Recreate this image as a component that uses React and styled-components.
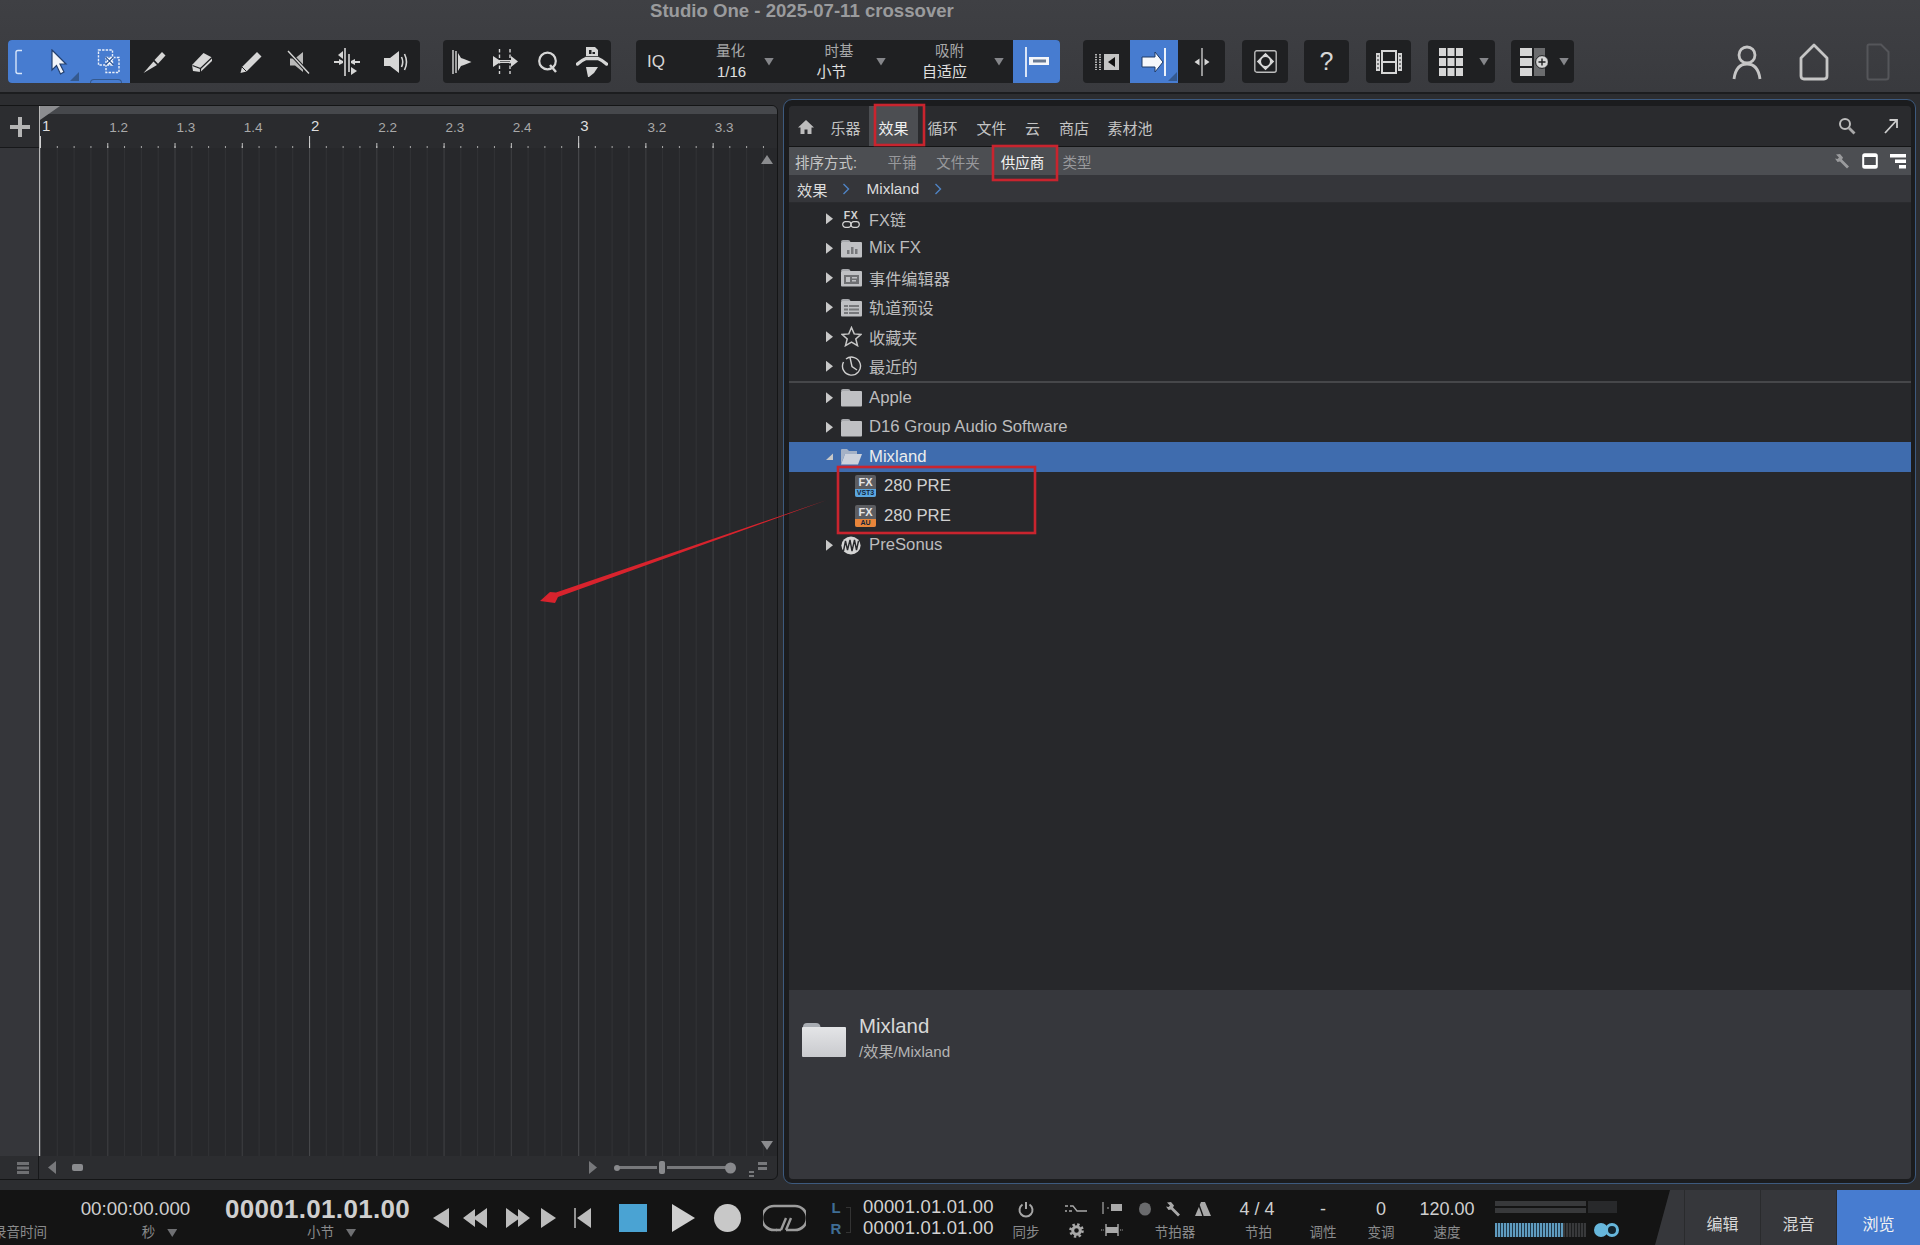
import React from 'react';
import styled, { createGlobalStyle } from 'styled-components';

const sans = `"Liberation Sans","Noto Sans CJK SC",sans-serif`;

const Global = createGlobalStyle`
  html, body { margin: 0; padding: 0; background: #141414; }
  body { font-family: ${sans}; overflow: hidden; }
  * { box-sizing: border-box; }
`;

const Page = styled.div`
  position: relative; width: 1920px; height: 1245px; overflow: hidden;
  display: flex; flex-direction: column; background: #2c2d30;
`;

/* ---------- top bar ---------- */
const TopBar = styled.header`
  height: 94px; flex: none; background: linear-gradient(#3f4044, #393a3e);
  border-bottom: 2px solid #1c1d1f;
`;
const Title = styled.div`
  height: 20px; line-height: 20px; padding-left: 650px; padding-top: 1px;
  font-size: 18.6px; font-weight: 700; color: #9a9b9d; white-space: nowrap;
`;
const Toolbar = styled.div`
  display: flex; align-items: flex-start; height: 43px; margin-top: 20px; padding-left: 8px;
`;
const Group = styled.div`
  display: flex; align-items: stretch; height: 43px; flex: none;
  width: ${p => p.$w}px; margin-left: ${p => p.$ml || 0}px; padding-left: ${p => p.$pl || 0}px;
  background: #1f2022; border-radius: 4px; overflow: hidden; color: #d6d6d6;
`;
const Tool = styled.div`
  position: relative; flex: none; display: flex; align-items: center; justify-content: center;
  width: ${p => p.$w}px; height: 100%; margin-left: ${p => (p.$end ? 'auto' : '0')};
  background: ${p => (p.$on ? '#477cd0' : 'transparent')};
`;
const Corner = styled.span`
  position: absolute; right: ${p => p.$r || 0}px; bottom: 2px; width: 9px; height: 9px;
  background: #34598f; clip-path: polygon(100% 0, 100% 100%, 0 100%);
`;
const ToolTab = styled.span`
  position: absolute; left: 2px; bottom: 0; width: 32px; height: 4px;
  border: 1px solid #34598f; border-bottom: 0; border-radius: 4px 4px 0 0;
`;
const IQ = styled.div`
  width: 40px; flex: none; display: flex; align-items: center; justify-content: center;
  font-size: 17px; color: #d6d6d6;
`;
const Selector = styled.div`
  display: flex; align-items: center; flex: none; margin-left: ${p => p.$ml}px;
`;
const SelectorStack = styled.div`
  width: ${p => p.$w}px; text-align: center; white-space: nowrap;
`;
const SelectorName = styled.div`
  font-size: 14.5px; line-height: 20px; color: #a8a9aa; padding-left: ${p => p.$o || 0}px;
`;
const SelectorValue = styled.div`
  font-size: 15px; line-height: 21px; color: #e0e0e0;
  padding-left: ${p => p.$l || 0}px; padding-right: ${p => p.$r || 0}px;
`;
const Caret = styled.span`
  flex: none; width: 10px; height: 8px; margin-left: ${p => p.$ml || 0}px; align-self: center;
  background: ${p => p.$c || '#85868a'}; clip-path: polygon(0 0, 100% 0, 50% 100%);
`;
const HelpMark = styled.span`
  font-size: 25px; font-weight: 400; color: #d6d6d6; line-height: 1;
`;
const RightTools = styled.div`
  display: flex; margin-left: 158px; gap: 37px; align-items: center; height: 43px;
`;

/* ---------- main ---------- */
const Main = styled.main`
  flex: 1; display: flex; align-items: flex-start; min-height: 0;
`;
const Editor = styled.section`
  width: 777px; height: 1073px; margin-top: 12px; flex: none; display: flex; flex-direction: column;
  border-radius: 0 5px 5px 0; overflow: hidden; outline: 1px solid #141516; background: #2a2b2e;
`;
const EditorBody = styled.div`
  flex: 1; display: flex; min-height: 0;
`;
const TrackColumn = styled.div`
  width: 39px; flex: none; display: flex; flex-direction: column; background: #35363a;
`;
const AddCell = styled.div`
  height: 42px; display: flex; align-items: center; justify-content: center;
  background: #2c2d30; border-bottom: 1px solid #17181a;
`;
const Timeline = styled.div`
  position: relative; flex: 1; display: flex; flex-direction: column; min-width: 0;
  border-left: 1px solid #b8b8b8;
`;
const RulerStrip = styled.div`
  position: relative; height: 8px; flex: none; background: #46484c;
`;
const RulerFlag = styled.span`
  position: absolute; left: 0; top: 0; width: 20px; height: 14px; background: #8b8c8f;
  clip-path: polygon(0 0, 100% 0, 0 100%);
`;
const Ruler = styled.div`
  height: 34px; flex: none; display: flex; background-color: #2a2b2e; overflow: hidden;
  background-image:
    linear-gradient(90deg, #d0d0d0 1px, transparent 1px),
    linear-gradient(90deg, #c2c2c2 1px, transparent 1px),
    linear-gradient(90deg, #aaaaaa 1px, transparent 1px);
  background-size: 269.08px 12px, 67.27px 5px, 16.82px 2px;
  background-position: 0 100%, 0 100%, 0 100%;
  background-repeat: repeat-x;
`;
const Beat = styled.div`
  width: 67.27px; flex: none; padding-left: 2px; padding-top: ${p => (p.$bar ? 4 : 6)}px;
  font-size: ${p => (p.$bar ? 15 : 13.5)}px; line-height: 16px;
  color: ${p => (p.$bar ? '#dedede' : '#a9a9a9')};
`;
const Grid = styled.div`
  flex: 1; background-color: #27282b;
  background-image:
    linear-gradient(90deg, #47484b 1px, transparent 1px),
    linear-gradient(90deg, #3b3c3f 1px, transparent 1px),
    linear-gradient(90deg, #313235 1px, transparent 1px);
  background-size: 269.08px 100%, 67.27px 100%, 16.82px 100%;
`;
const ScrollArrow = styled.span`
  position: absolute; right: 4px; width: 12px; height: 9px; background: #8b8c8f;
  ${p => (p.$up ? 'top: 49px; clip-path: polygon(50% 0, 100% 100%, 0 100%);'
    : 'bottom: 6px; clip-path: polygon(0 0, 100% 0, 50% 100%);')}
`;
const EditorFoot = styled.div`
  height: 23px; flex: none; display: flex; align-items: center; background: #2c2d30;
`;
const FootLeft = styled.div`
  width: 39px; height: 100%; flex: none; display: flex; align-items: center; justify-content: flex-end;
  padding-right: 9px; border-right: 1px solid #17181a;
`;
const FootArrow = styled.span`
  flex: none; width: 8px; height: 13px; background: #77787b; margin-left: ${p => p.$ml}px;
  clip-path: ${p => (p.$left ? 'polygon(100% 0, 100% 100%, 0 50%)' : 'polygon(0 0, 100% 50%, 0 100%)')};
`;
const ScrollThumb = styled.span`
  flex: none; width: 11px; height: 7px; border-radius: 2px; background: #8a8b8e; margin-left: 16px;
`;
const ZoomSlider = styled.div`
  position: relative; flex: none; width: 120px; height: 3px; margin-left: 18px; background: #77787b; border-radius: 2px;
`;
const SliderEnd = styled.span`
  position: absolute; top: 50%; transform: translateY(-50%); border-radius: 50%; background: #88898c;
  left: ${p => p.$x}px; width: ${p => p.$s}px; height: ${p => p.$s}px;
`;
const SliderThumb = styled.span`
  position: absolute; left: 44px; top: -5px; width: 6px; height: 13px; border-radius: 2px; background: #88898c;
  box-shadow: 0 0 0 2px #2c2d30;
`;

/* ---------- browser panel ---------- */
const Frame = styled.section`
  width: 1133px; height: 1085px; margin: 5px 0 0 6px; flex: none; padding: 6px 4px 4px 5px;
  border: 1.5px solid #3d5a7e; border-radius: 9px; background: #1b1c1e;
`;
const Panel = styled.div`
  height: 100%; display: flex; flex-direction: column; background: #27282b; border-radius: 4px; overflow: hidden;
`;
const TabBar = styled.nav`
  height: 41px; flex: none; display: flex; align-items: stretch; background: #2a2b2e;
  border-bottom: 1px solid #141516; font-size: 15px; color: #c4c4c4;
`;
const Tab = styled.div`
  flex: none; width: ${p => p.$w}px; display: flex; align-items: center; justify-content: center;
  background: ${p => (p.$on ? '#4c4e52' : 'transparent')}; color: ${p => (p.$on ? '#f0f0f0' : '#c4c4c4')};
  padding-top: 2px; white-space: nowrap;
`;
const TabRight = styled.div`
  margin-left: auto; display: flex; align-items: center; gap: 28px; padding-right: 13px;
`;
const SortBar = styled.div`
  height: 28px; flex: none; display: flex; align-items: center; background: #4c4e52; font-size: 14.5px; color: #c6c6c6;
  padding-left: 6px;
`;
const SortLabel = styled.span`
  width: 84px; flex: none; white-space: nowrap;
`;
const SortOption = styled.span`
  flex: none; width: ${p => p.$w}px; text-align: center; white-space: nowrap;
  color: ${p => (p.$on ? '#f4f4f4' : '#98999c')};
`;
const SortIcons = styled.div`
  margin-left: auto; display: flex; align-items: center; gap: 12px; padding-right: 5px;
`;
const Crumbs = styled.div`
  height: 28px; flex: none; display: flex; align-items: center; background: #35363a;
  font-size: 15.3px; color: #dcdcdc; padding-left: 8px; border-bottom: 1px solid #2a2b2e;
`;
const CrumbChevron = styled.svg`
  flex: none; width: 8px; height: 12px; margin: 0 ${p => p.$mr || 0}px 0 ${p => p.$ml || 0}px;
`;
const Tree = styled.div`
  flex: 1; padding-top: 1px; min-height: 0;
`;
const Row = styled.div`
  height: 29.5px; display: flex; align-items: center; padding-left: ${p => p.$pl || 37}px;
  background: ${p => (p.$on ? '#3f6cae' : 'transparent')};
  color: ${p => (p.$on ? '#ececec' : p.$leaf ? '#d0d0d0' : '#bcbcbd')};
  font-size: ${p => (p.$lat ? 16.7 : 16.2)}px; white-space: nowrap;
`;
const Twist = styled.span`
  flex: none; width: 7px; height: 11px; margin-right: 7px; background: #c8c8c8;
  clip-path: ${p => (p.$open ? 'polygon(100% 20%, 100% 80%, 0 80%)' : 'polygon(0 0, 100% 50%, 0 100%)')};
`;
const RowIcon = styled.span`
  flex: none; width: 22px; height: 22px; margin-right: 7px; display: flex; align-items: center; justify-content: center;
`;
const Separator = styled.div`
  height: 2px; background: #46474a;
`;
const ChainIcon = styled.span`
  display: flex; flex-direction: column; align-items: center; color: #d4d4d4;
  font-size: 10.5px; font-weight: 700; line-height: 11px; letter-spacing: .5px;
`;
const FxBadge = styled.span`
  flex: none; width: 21px; height: 22px; margin-right: 8px; border-radius: 2px; overflow: hidden;
  display: flex; flex-direction: column; background: #5c5d61; text-align: center;
`;
const FxTop = styled.span`
  height: 14px; line-height: 14px; font-size: 11px; font-weight: 700; color: #e6e6e6;
`;
const FxBottom = styled.span`
  height: 8px; line-height: 8px; font-size: 7px; font-weight: 700;
  background: ${p => p.$c}; color: #12243a;
`;
const Info = styled.div`
  height: 189px; flex: none; display: flex; align-items: flex-start; padding: 32px 0 0 13px; background: #36373c;
`;
const InfoText = styled.div`
  margin-left: 13px; margin-top: -9px;
`;
const InfoName = styled.div`
  font-size: 20.4px; line-height: 26px; color: #d8d8d8;
`;
const InfoPath = styled.div`
  font-size: 15.2px; line-height: 20px; margin-top: 3px; color: #b4b4b4;
`;

/* ---------- transport ---------- */
const Transport = styled.footer`
  height: 55px; flex: none; display: flex; align-items: flex-start; background: #141414; color: #cfcfcf;
`;
const Cell = styled.div`
  flex: none; width: ${p => p.$w}px; margin-left: ${p => p.$ml || 0}px; height: 55px;
  display: flex; flex-direction: column; align-items: center; padding-top: 7px;
`;
const Value = styled.div`
  height: 24px; line-height: 24px; font-size: ${p => p.$s || 18}px; white-space: nowrap; color: #cfcfcf;
  display: flex; align-items: center;
  font-weight: ${p => (p.$bold ? 700 : 400)}; letter-spacing: ${p => p.$ls || 0}px;
`;
const Label = styled.div`
  display: flex; align-items: center; gap: 12px; height: 20px; margin-top: 2px; line-height: 20px;
  font-size: 13.5px; color: #8a8b8c; white-space: nowrap; padding-left: ${p => p.$pl || 0}px;
`;
const RecLabel = styled.div`
  flex: none; width: 47px; height: 55px; display: flex; justify-content: flex-end;
  padding-top: 33px; font-size: 13.5px; line-height: 20px; color: #8a8b8c; white-space: nowrap;
`;
const TBtn = styled.span`
  flex: none; display: block; margin: ${p => p.$mt || 14}px 0 0 ${p => p.$ml}px; line-height: 0;
`;
const Stop = styled.span`
  flex: none; width: 28px; height: 28px; margin: 14px 0 0 ${p => p.$ml}px; background: #4aa3d3;
`;
const Play = styled.span`
  flex: none; width: 23px; height: 28px; margin: 14px 0 0 ${p => p.$ml}px; background: #cfcfcf;
  clip-path: polygon(0 0, 100% 50%, 0 100%);
`;
const Rec = styled.span`
  flex: none; width: 27px; height: 28px; margin: 14px 0 0 ${p => p.$ml}px; background: #c8c8c8; border-radius: 50%;
`;
const LR = styled.div`
  flex: none; width: 14px; margin: 7px 0 0 23px; color: #3f6d94; font-size: 15px; font-weight: 700; line-height: 21px; text-align: center;
`;
const LRBracket = styled.span`
  flex: none; width: 5px; height: 26px; margin: 17px 12px 0 3px; border: 1px solid #333; border-left: 0;
`;
const LocCol = styled.div`
  flex: none; width: 131px; margin-top: 6px; font-size: 18.5px; line-height: 21px; color: #d2d2d2; white-space: nowrap; letter-spacing: .15px;
`;
const MiniIcons = styled.div`
  flex: none; display: grid; grid-template-columns: 36px 36px; grid-auto-rows: 22px; width: 72px; margin: 7px 0 0 ${p => p.$ml}px;
  align-items: center; justify-items: center; color: #a9a9a9;
`;
const MetroIcons = styled.div`
  display: flex; align-items: center; gap: 14px; height: 24px; color: #a9a9a9;
`;
const Meters = styled.div`
  flex: none; width: 122px; margin: 11px 0 0 ${p => p.$ml}px; display: flex; flex-direction: column; gap: 10px;
`;
const MeterTop = styled.div`
  display: grid; grid-template-columns: 91px 29px; column-gap: 2px; height: 12px;
`;
const MeterBars = styled.div`
  display: flex; flex-direction: column; justify-content: space-between;
`;
const MeterBar = styled.span`
  height: 5px; background: #38393b;
`;
const MeterBox = styled.span`
  background: #28292b;
`;
const MeterBottom = styled.div`
  display: flex; align-items: center; height: 14px;
`;
const VU = styled.div`
  flex: none; width: 91px; height: 14px; display: flex;
`;
const VULevel = styled.span`
  width: 68px; height: 100%;
  background: repeating-linear-gradient(90deg, #5f9bbf 0 2px, #213544 2px 3px);
`;
const VURest = styled.span`
  flex: 1; background: repeating-linear-gradient(90deg, #38393b 0 2px, #1c1d1e 2px 3px);
`;
const ToggleLeft = styled.span`
  flex: none; width: 14px; height: 14px; margin-left: 8px; border-radius: 50%; background: #67b7dc;
`;
const ToggleRight = styled.span`
  flex: none; width: 14px; height: 14px; margin-left: -3px; border-radius: 50%; background: #12242e; border: 3px solid #67b7dc;
`;
const Slant = styled.div`
  flex: none; width: 29px; height: 55px; margin-left: auto; background: #36373b;
  clip-path: polygon(15px 0, 100% 0, 100% 100%, 0 100%);
`;
const PageTab = styled.div`
  flex: none; width: ${p => p.$w}px; height: 55px; display: flex; align-items: center; justify-content: center;
  padding-top: 11px; font-size: 16px; color: ${p => (p.$on ? '#f2f2f2' : '#d8d8d8')};
  background: ${p => (p.$on ? '#477cd0' : '#36373b')}; border-left: 1px solid #2a2b2d;
`;
const Overlay = styled.svg`
  position: absolute; inset: 0; width: 1920px; height: 1245px; pointer-events: none;
`;
const Svg = styled.svg`
  display: block; flex: none;
`;

/* ---------- icons ---------- */
const I = ({ w = 24, h = 24, vb = '0 0 24 24', children, ...r }) => (
  <Svg width={w} height={h} viewBox={vb} {...r}>{children}</Svg>
);
const L = '#d6d6d6';
const D = '#1f2022';
const Icons = {
  Bracket: () => <I w={10} h={26} vb="0 0 10 26"><path d="M8 1.5H4Q2 1.5 2 3.5V22.5Q2 24.5 4 24.5H8" fill="none" stroke="#d8e6fa" strokeWidth="1.4" /></I>,
  Cursor: () => <I w={18} h={26} vb="0 0 18 26"><path d="M2 1L16 15H10L14 23L10.5 25L6.5 16.5L2 21Z" fill="#f1f4f9" stroke="#23406f" strokeWidth="1.2" /></I>,
  Range: () => <I w={24} h={28} vb="0 0 24 28"><rect x="1.5" y="2" width="14" height="15" fill="none" stroke="#eaf0fa" strokeWidth="1.4" strokeDasharray="2.4 1.2" /><rect x="9" y="9.5" width="13" height="15" fill="none" stroke="#eaf0fa" strokeWidth="1.4" strokeDasharray="2.4 1.2" /><path d="M10 10h5.5v6.5H10z" fill="#fff" /><path d="M8.5 9l8 8M16.5 9l-8 8" stroke="#2d5595" strokeWidth="1.1" /></I>,
  Knife: () => <I><path d="M1.5 23L11.5 11.5L15 15Z" fill={L} /><path d="M12.5 10L20 2L23.5 5.5L16 13.8Z" fill={L} /></I>,
  Eraser: () => <I><path d="M2 15L13.5 3L22 7.5V11L10.5 22L3 21Z" fill={L} /><path d="M2.5 15.5L10.5 18.5L22 7.5M10.5 18.5V22" fill="none" stroke={D} strokeWidth="1.2" /></I>,
  Pencil: () => <I><path d="M1.5 23L3 17L18 2L22.5 6.5L7.5 21.5Z" fill={L} /><path d="M3 17L7.5 21.5" stroke={D} strokeWidth="1" /></I>,
  Mute: () => <I><path d="M3 8.5H8L16 2V22L8 15.5H3Z" fill="#b9b9b9" /><path d="M1 1L22 23.5" stroke={D} strokeWidth="3.5" /><path d="M1 1L22 23.5" stroke={L} strokeWidth="1.4" /></I>,
  Bend: () => <I w={26} h={28} vb="0 0 26 28"><path d="M11 0V28M15 6V24" stroke={L} strokeWidth="1.6" /><path d="M0 13H9V15H0ZM17 13H26V15H17Z" fill={L} /><path d="M9 3V11L4 7Z" fill={L} /><path d="M17 19L23 23L17 27Z" fill={L} /><path d="M5 11L9 13V15L5 17Z" fill={L} /><path d="M21 11L17 13V15L21 17Z" fill={L} /></I>,
  Speaker: () => <I w={26} h={26} vb="0 0 26 26"><path d="M1 9H7L16 2V24L7 17H1Z" fill={L} /><path d="M18.5 8Q21 13 18.5 18M21.5 5Q25.5 13 21.5 21" fill="none" stroke={L} strokeWidth="1.6" /></I>,
  Quant: () => <I w={20} h={24} vb="0 0 20 24"><path d="M1 0V24M4 1V23" stroke="#b8b8b8" strokeWidth="1.7" /><path d="M6 3L9 8L12 9L19.5 12L12 15L9 16L6 21Z" fill={L} /></I>,
  Strip: () => <I w={25} h={25} vb="0 0 25 25"><path d="M6.5 0V25M17 0V25" stroke={L} strokeWidth="1.4" strokeDasharray="3.5 2" /><path d="M0 7L6 11V14L0 18ZM18 7L25 12.5L18 18Z" fill={L} /><path d="M6 11H18V14H6Z" fill={L} /><path d="M7 12.5H17" stroke={D} strokeWidth=".6" /></I>,
  Q: () => <I w={22} h={24} vb="0 0 22 24"><circle cx="10.5" cy="11" r="8.3" fill="none" stroke={L} strokeWidth="2.2" /><path d="M13 15L19 22" stroke={L} strokeWidth="2.4" /></I>,
  Bounce: () => <I w={32} h={30} vb="0 0 32 30"><path d="M10 0H19L22 3V9H10Z" fill={L} /><path d="M13 3H15.5V7H13ZM16.5 5H19V7H16.5Z" fill={D} /><path d="M1.5 17Q6 13 10 11.5H22Q26 13 30.5 17" fill="none" stroke={L} strokeWidth="3.4" strokeLinecap="round" /><path d="M10 20H22L18 26L13 30H12Z" fill={L} /></I>,
  Snap: () => <I w={26} h={32} vb="0 0 26 32"><path d="M2 1V31" stroke="#fff" strokeWidth="1.6" /><rect x="5" y="11" width="20" height="8" fill="#f4f6fa" /><rect x="9" y="13.5" width="13" height="3" fill="#6a7a92" /></I>,
  Pre: () => <I w={24} h={16} vb="0 0 24 16"><path d="M1 0V16M5 0V16" stroke={L} strokeWidth="1.6" strokeDasharray="1.4 1.1" /><path d="M9 0H24V16H9Z" fill="#c4c4c4" /><path d="M20 3V13L13 8Z" fill="#111" /></I>,
  Insert: () => <I w={26} h={30} vb="0 0 26 30"><path d="M24 1V29" stroke="#fff" strokeWidth="1.8" /><path d="M1 10H14V5L22 15L14 25V20H1Z" fill="#f6f8fb" stroke="#1e3a66" strokeWidth="1" /></I>,
  Split: () => <I w={18} h={30} vb="0 0 18 30"><path d="M9 1V29" stroke={L} strokeWidth="1.3" /><path d="M6.5 11.5V18.5L1.5 15ZM11.5 11.5V18.5L16.5 15Z" fill={L} /></I>,
  Fit: () => <I w={23} h={23} vb="0 0 23 23"><rect x=".8" y=".8" width="21.4" height="21.4" rx="2" fill="none" stroke="#bdbdbd" strokeWidth="1.4" /><circle cx="11.5" cy="11.5" r="5.4" fill="none" stroke={L} strokeWidth="1.9" /><path d="M11.5 2.8L15 6.3H8ZM11.5 20.2L15 16.7H8ZM2.8 11.5L6.3 8V15ZM20.2 11.5L16.7 8V15Z" fill={L} /></I>,
  Film: () => <I w={26} h={28} vb="0 0 26 28"><path d="M5 2H21V26H5ZM0 5H4V23H0ZM22 5H26V23H22Z" fill={L} /><path d="M7 4H19V13H7ZM7 15H19V24H7Z" fill={D} /><path d="M1 8H3M1 12H3M1 16H3M1 20H3M23 8H25M23 12H25M23 16H25M23 20H25" stroke={D} strokeWidth="1.2" /></I>,
  Cells: () => <I w={24} h={28} vb="0 0 24 28"><path d="M0 0H7V8H0ZM8.5 0H15.5V8H8.5ZM17 0H24V8H17ZM0 10H7V18H0ZM8.5 10H15.5V18H8.5ZM17 10H24V18H17ZM0 20H7V28H0ZM8.5 20H15.5V28H8.5ZM17 20H24V28H17Z" fill={L} /></I>,
  AddCols: () => <I w={28} h={28} vb="0 0 28 28"><path d="M0 0H12V8H0ZM0 10H12V18H0ZM0 20H12V28H0Z" fill={L} /><path d="M14 0H25V28H14Z" fill="#6b6c6e" /><circle cx="22" cy="14" r="6.4" fill={L} stroke={D} strokeWidth="1" /><path d="M18.5 14H25.5M22 10.5V17.5" stroke={D} strokeWidth="1.4" /></I>,
  User: () => <I w={30} h={38} vb="0 0 30 38"><circle cx="15" cy="12" r="8" fill="none" stroke="#c6c6c6" strokeWidth="2.8" /><path d="M2 36Q4 21 15 21Q26 21 28 36" fill="none" stroke="#c6c6c6" strokeWidth="2.8" /></I>,
  Home: () => <I w={30} h={38} vb="0 0 30 38"><path d="M15 2L28 15V33Q28 36 25 36H5Q2 36 2 33V15Z" fill="none" stroke="#c6c6c6" strokeWidth="2.8" strokeLinejoin="round" /></I>,
  Doc: () => <I w={24} h={38} vb="0 0 24 38"><path d="M3 1.5H15L22.5 9V34Q22.5 36.5 20 36.5H3Q1.5 36.5 1.5 34V3Q1.5 1.5 3 1.5Z" fill="none" stroke="#55565a" strokeWidth="2" /></I>,
  Plus: () => <I w={22} h={22} vb="0 0 22 22"><path d="M9 1H13V9H21V13H13V21H9V13H1V9H9Z" fill="#b5b5b5" /></I>,
  House: () => <I w={16} h={16} vb="0 0 16 16"><path d="M8 1L16 8.5H13.5V15H9.5V10.5H6.5V15H2.5V8.5H0Z" fill="#bdbdbd" /></I>,
  Search: () => <I w={18} h={18} vb="0 0 18 18"><circle cx="7" cy="7" r="5" fill="none" stroke="#bcbcbc" strokeWidth="2" /><path d="M11 11L16.5 16.5" stroke="#a8a8a8" strokeWidth="2.8" /></I>,
  Pop: () => <I w={14} h={16} vb="0 0 14 16"><path d="M1 15L12 3M5.5 2H13V10" fill="none" stroke="#cdcdcd" strokeWidth="1.8" /></I>,
  WrenchSm: ({ c = '#9a9b9d', s = 16 }) => <I w={s} h={s} vb="0 0 16 16"><path d="M2 1.5L6 1L9 4.5L8 6.5L15 13.5L13 15.5L6 8.5L3.5 9L1 5.5L3.5 6L5 4.5Z" fill={c} /></I>,
  Window: () => <I w={16} h={16} vb="0 0 16 16"><rect x="1.2" y="1.2" width="13.6" height="13.6" rx="1.5" fill="none" stroke="#fff" strokeWidth="2" /><rect x="1" y="1" width="14" height="3" fill="#fff" /><rect x="1" y="12" width="14" height="3" fill="#fff" /></I>,
  List: () => <I w={16} h={16} vb="0 0 16 16"><path d="M0 1H16V4.5H0ZM5 6.5H16V10H5ZM9 12H16V15.5H9Z" fill="#fff" /></I>,
  Chain: () => <I w={18} h={7} vb="0 0 18 7"><rect x=".7" y=".7" width="8.3" height="5.6" rx="2.8" fill="none" stroke="#d4d4d4" strokeWidth="1.2" /><rect x="9" y=".7" width="8.3" height="5.6" rx="2.8" fill="none" stroke="#d4d4d4" strokeWidth="1.2" /></I>,
  Folder: ({ children, w = 21, h = 19 }) => (
    <I w={w} h={h} vb="0 0 21 19"><path d="M0 3Q0 1 2 1H7Q9 1 9.5 3H0Z" fill="#a7a9ad" /><rect x="0" y="3" width="21" height="15.5" rx="1" fill="#bfc0c3" />{children}</I>
  ),
  FolderOpen: () => <I w={21} h={17} vb="0 0 21 17"><path d="M0 2Q0 1 1 1H6L8 3H16V6H4L0 16Z" fill="#a5b2c6" /><path d="M4 6H21L17 16.5H0Z" fill="#ccd2dc" /></I>,
  Star: () => <I w={21} h={21} vb="0 0 21 21"><path d="M10.5 1.5L13.2 7.9L20 8.4L14.8 12.9L16.5 19.6L10.5 16L4.5 19.6L6.2 12.9L1 8.4L7.8 7.9Z" fill="none" stroke="#c8c8c8" strokeWidth="1.5" /></I>,
  Clock: () => <I w={21} h={21} vb="0 0 21 21"><path d="M5 3A9 9 0 1 1 2.5 6" fill="none" stroke="#cfcfcf" strokeWidth="1.4" /><path d="M9 1.5L11 10.5L16 14" fill="none" stroke="#cfcfcf" strokeWidth="1.4" /></I>,
  PreSonus: () => <I w={20} h={19} vb="0 0 20 19"><ellipse cx="10" cy="9.5" rx="9.6" ry="9" fill="#d5d5d5" /><path d="M2.5 15L4.5 5L6.5 14L9 4L11 15L13.5 4L15.5 14L17.5 5" fill="none" stroke="#27282b" strokeWidth="1.4" /></I>,
  Back: () => <I w={16} h={20} vb="0 0 16 20"><path d="M16 0V20L0 10Z" fill="#bdbdbd" /></I>,
  Rew: () => <I w={24} h={20} vb="0 0 24 20"><path d="M12 1V19L0 10ZM24 0V20L10 10Z" fill="#bdbdbd" /></I>,
  Fwd: () => <I w={24} h={20} vb="0 0 24 20"><path d="M0 0V20L14 10ZM12 1V19L24 10Z" fill="#bdbdbd" /></I>,
  Next: () => <I w={15} h={20} vb="0 0 15 20"><path d="M0 0V20L15 10Z" fill="#bdbdbd" /></I>,
  Start: () => <I w={17} h={20} vb="0 0 17 20"><path d="M1 0V20" stroke="#bdbdbd" strokeWidth="1.5" /><path d="M17 0V20L3 10Z" fill="#bdbdbd" /></I>,
  Loop: () => <I w={43} h={28} vb="0 0 43 28"><path d="M14 26H11A9.5 9.5 0 0 1 11 2H32A9.5 9.5 0 0 1 32 26H23" fill="none" stroke="#9c9c9c" strokeWidth="2.6" /><path d="M18 26L23 14M18 26L13 26M23 26L28 14" fill="none" stroke="#9c9c9c" strokeWidth="2.4" /></I>,
  Power: () => <I w={16} h={17} vb="0 0 16 17"><path d="M8 1V8" stroke="#a6a6a6" strokeWidth="2" /><path d="M4.5 3.5A6.5 6.5 0 1 0 11.5 3.5" fill="none" stroke="#a6a6a6" strokeWidth="2" /></I>,
  Ramp: () => <I w={22} h={9} vb="0 0 22 9"><path d="M0 2H3M5 2H8L12 7H22M0 7H2M4 7H7" fill="none" stroke="#a9a9a9" strokeWidth="1.3" /></I>,
  Flag: () => <I w={20} h={12} vb="0 0 20 12"><path d="M1 0V12M5 6H7" stroke="#a9a9a9" strokeWidth="1.2" /><path d="M9 2H20V9H9Z" fill="#a9a9a9" /></I>,
  Gear: () => <I w={15} h={15} vb="0 0 15 15"><circle cx="7.5" cy="7.5" r="3.8" fill="none" stroke="#a9a9a9" strokeWidth="3" /><circle cx="7.5" cy="7.5" r="6" fill="none" stroke="#a9a9a9" strokeWidth="2.6" strokeDasharray="2.4 2.3" /></I>,
  Span: () => <I w={22} h={12} vb="0 0 22 12"><path d="M0 6H3M19 6H22" stroke="#a9a9a9" strokeWidth="1.2" strokeDasharray="1.2 1" /><path d="M5 0V12M17 0V12" stroke="#a9a9a9" strokeWidth="1.4" /><path d="M5 3H17V9H5Z" fill="#a9a9a9" /></I>,
  Dot: () => <I w={12} h={14} vb="0 0 12 14"><ellipse cx="6" cy="7" rx="6" ry="6.6" fill="#6a6b6d" /></I>,
  Metro: () => <I w={16} h={14} vb="0 0 16 14"><path d="M6 0H10L16 14H0Z" fill="#a9a9a9" /><path d="M8 14L4 3" stroke="#141414" strokeWidth="1.4" /></I>,
};
const Chev = ({ ml, mr }) => (
  <CrumbChevron viewBox="0 0 8 12" $ml={ml} $mr={mr}><path d="M1.5 1L6.5 6L1.5 11" fill="none" stroke="#4f83c4" strokeWidth="1.4" /></CrumbChevron>
);

const bars = ['1', '1.2', '1.3', '1.4', '2', '2.2', '2.3', '2.4', '3', '3.2', '3.3', ''];

const Item = ({ icon, children, on, open, lat }) => (
  <Row $on={on} $lat={lat}><Twist $open={open} /><RowIcon>{icon}</RowIcon>{children}</Row>
);

export default function App() {
  return (
    <Page>
      <Global />
      <TopBar>
        <Title>Studio One - 2025-07-11 crossover</Title>
        <Toolbar>
          <Group $w={412}>
            <Tool $w={22} $on><Icons.Bracket /></Tool>
            <Tool $w={58} $on><Icons.Cursor /><Corner $r={9} /></Tool>
            <Tool $w={42} $on><Icons.Range /><ToolTab /></Tool>
            <Tool $w={48.33}><Icons.Knife /></Tool>
            <Tool $w={48.33}><Icons.Eraser /></Tool>
            <Tool $w={48.33}><Icons.Pencil /></Tool>
            <Tool $w={48.33}><Icons.Mute /></Tool>
            <Tool $w={48.33}><Icons.Bend /></Tool>
            <Tool $w={48.33}><Icons.Speaker /></Tool>
          </Group>
          <Group $w={168} $ml={23}>
            <Tool $w={38}><Icons.Quant /></Tool>
            <Tool $w={48}><Icons.Strip /></Tool>
            <Tool $w={38}><Icons.Q /></Tool>
            <Tool $w={50}><Icons.Bounce /></Tool>
          </Group>
          <Group $w={424} $ml={25}>
            <IQ>IQ</IQ>
            <Selector $ml={22}>
              <SelectorStack $w={60}>
                <SelectorName $o={5}>量化</SelectorName>
                <SelectorValue $l={7}>1/16</SelectorValue>
              </SelectorStack>
              <Caret $ml={6} />
            </Selector>
            <Selector $ml={30}>
              <SelectorStack $w={60}>
                <SelectorName $o={10}>时基</SelectorName>
                <SelectorValue $r={5}>小节</SelectorValue>
              </SelectorStack>
              <Caret $ml={12} />
            </Selector>
            <Selector $ml={26}>
              <SelectorStack $w={70}>
                <SelectorName $o={5}>吸附</SelectorName>
                <SelectorValue $r={5}>自适应</SelectorValue>
              </SelectorStack>
              <Caret $ml={12} />
            </Selector>
            <Tool $w={47} $on $end><Icons.Snap /></Tool>
          </Group>
          <Group $w={142} $ml={23}>
            <Tool $w={47}><Icons.Pre /></Tool>
            <Tool $w={48} $on><Icons.Insert /><Corner $r={1} /></Tool>
            <Tool $w={47}><Icons.Split /></Tool>
          </Group>
          <Group $w={46} $ml={17}><Tool $w={46}><Icons.Fit /></Tool></Group>
          <Group $w={45} $ml={16}><Tool $w={45}><HelpMark>?</HelpMark></Tool></Group>
          <Group $w={45} $ml={17}><Tool $w={45}><Icons.Film /></Tool></Group>
          <Group $w={67} $ml={17}>
            <Tool $w={46}><Icons.Cells /></Tool>
            <Caret $ml={5} />
          </Group>
          <Group $w={63} $ml={16}>
            <Tool $w={46}><Icons.AddCols /></Tool>
            <Caret $ml={2} />
          </Group>
          <RightTools>
            <Icons.User />
            <Icons.Home />
            <Icons.Doc />
          </RightTools>
        </Toolbar>
      </TopBar>

      <Main>
        <Editor>
          <EditorBody>
            <TrackColumn>
              <AddCell><Icons.Plus /></AddCell>
            </TrackColumn>
            <Timeline>
              <RulerStrip />
              <RulerFlag />
              <Ruler>
                {bars.map((b, i) => <Beat key={i} $bar={b.length === 1}>{b}</Beat>)}
              </Ruler>
              <Grid />
              <ScrollArrow $up />
              <ScrollArrow />
            </Timeline>
          </EditorBody>
          <EditorFoot>
            <FootLeft>
              <I w={12} h={14} vb="0 0 12 14"><path d="M0 1H12V4H0ZM0 5.5H12V8.5H0ZM0 10H12V13H0Z" fill="#6f7073" /></I>
            </FootLeft>
            <FootArrow $left $ml={9} />
            <ScrollThumb />
            <FootArrow $ml={506} />
            <ZoomSlider>
              <SliderEnd $x={-1} $s={6} />
              <SliderThumb />
              <SliderEnd $x={110} $s={11} />
            </ZoomSlider>
            <Svg width={22} height={20} viewBox="0 0 22 20" style={{ marginLeft: 12 }}>
              <path d="M11 4H20V7H11ZM11 9H20V12H11ZM2 13H7V15H2ZM2 17H7V19H2Z" fill="#77787b" />
            </Svg>
          </EditorFoot>
        </Editor>

        <Frame>
          <Panel>
            <TabBar>
              <Tab $w={33}><Icons.House /></Tab>
              <Tab $w={47}>乐器</Tab>
              <Tab $w={49} $on>效果</Tab>
              <Tab $w={49}>循环</Tab>
              <Tab $w={49}>文件</Tab>
              <Tab $w={33}>云</Tab>
              <Tab $w={50}>商店</Tab>
              <Tab $w={62}>素材池</Tab>
              <TabRight><Icons.Search /><Icons.Pop /></TabRight>
            </TabBar>
            <SortBar>
              <SortLabel>排序方式:</SortLabel>
              <SortOption $w={46}>平铺</SortOption>
              <SortOption $w={66}>文件夹</SortOption>
              <SortOption $w={63} $on>供应商</SortOption>
              <SortOption $w={46}>类型</SortOption>
              <SortIcons><Icons.WrenchSm /><Icons.Window /><Icons.List /></SortIcons>
            </SortBar>
            <Crumbs>
              效果<Chev ml={14} mr={17} />Mixland<Chev ml={15} />
            </Crumbs>
            <Tree>
              <Item icon={<ChainIcon>FX<Icons.Chain /></ChainIcon>}>FX链</Item>
              <Item lat icon={<Icons.Folder><path d="M6 15V11H8.5V15ZM10 15V8H12.5V15ZM14 15V10H16.5V15Z" fill="#77787b" /></Icons.Folder>}>Mix FX</Item>
              <Item icon={<Icons.Folder><rect x="3" y="7" width="15" height="9" fill="#6f7073" /><path d="M5 9H9V14H5ZM11 9H16V10.5H11ZM11 12H15V13.5H11Z" fill="#bfc0c3" /></Icons.Folder>}>事件编辑器</Item>
              <Item icon={<Icons.Folder><path d="M3 7H18V9H3ZM3 10.5H18V12.5H3ZM3 14H18V16H3Z" fill="#77787b" /><path d="M7.5 7V16" stroke="#bfc0c3" strokeWidth="1" /></Icons.Folder>}>轨道预设</Item>
              <Item icon={<Icons.Star />}>收藏夹</Item>
              <Item icon={<Icons.Clock />}>最近的</Item>
              <Separator />
              <Item lat icon={<Icons.Folder />}>Apple</Item>
              <Item lat icon={<Icons.Folder />}>D16 Group Audio Software</Item>
              <Item lat icon={<Icons.FolderOpen />} on open>Mixland</Item>
              <Row $pl={66} $leaf $lat><FxBadge><FxTop>FX</FxTop><FxBottom $c="#5aa6e0">VST3</FxBottom></FxBadge>280 PRE</Row>
              <Row $pl={66} $leaf $lat><FxBadge><FxTop>FX</FxTop><FxBottom $c="#e8853a">AU</FxBottom></FxBadge>280 PRE</Row>
              <Item lat icon={<Icons.PreSonus />}>PreSonus</Item>
            </Tree>
            <Info>
              <I w={44} h={36} vb="0 0 44 36">
                <defs>
                  <linearGradient id="fold" x1="0" y1="0" x2="0" y2="1">
                    <stop offset="0" stopColor="#e4e5e7" /><stop offset="1" stopColor="#c9cace" />
                  </linearGradient>
                </defs>
                <path d="M1 8V5Q1 1 5 1H14Q18 1 18.5 5H1Z" fill="#a9adb3" />
                <rect x="0" y="5" width="44" height="30" rx="1" fill="url(#fold)" />
              </I>
              <InfoText>
                <InfoName>Mixland</InfoName>
                <InfoPath>/效果/Mixland</InfoPath>
              </InfoText>
            </Info>
          </Panel>
        </Frame>
      </Main>

      <Transport>
        <RecLabel>录音时间</RecLabel>
        <Cell $w={111} $ml={33}>
          <Value $s={18.8}>00:00:00.000</Value>
          <Label $pl={48}>秒<Caret $c="#6f7073" /></Label>
        </Cell>
        <Cell $w={183} $ml={35}>
          <Value $s={26} $bold $ls={0.3}>00001.01.01.00</Value>
          <Label $pl={28}>小节<Caret $c="#6f7073" /></Label>
        </Cell>
        <TBtn $ml={24} $mt={18}><Icons.Back /></TBtn>
        <TBtn $ml={14} $mt={18}><Icons.Rew /></TBtn>
        <TBtn $ml={19} $mt={18}><Icons.Fwd /></TBtn>
        <TBtn $ml={11} $mt={18}><Icons.Next /></TBtn>
        <TBtn $ml={18} $mt={18}><Icons.Start /></TBtn>
        <Stop $ml={28} />
        <Play $ml={25} />
        <Rec $ml={19} />
        <TBtn $ml={22}><Icons.Loop /></TBtn>
        <LR>L<br />R</LR>
        <LRBracket />
        <LocCol>00001.01.01.00<br />00001.01.01.00</LocCol>
        <Cell $w={34} $ml={15}>
          <Value><Icons.Power /></Value>
          <Label>同步</Label>
        </Cell>
        <MiniIcons $ml={15}>
          <Icons.Ramp /><Icons.Flag />
          <Icons.Gear /><Icons.Span />
        </MiniIcons>
        <Cell $w={80} $ml={5}>
          <MetroIcons><Icons.Dot /><Icons.WrenchSm c="#a9a9a9" /><Icons.Metro /></MetroIcons>
          <Label>节拍器</Label>
        </Cell>
        <Cell $w={60} $ml={12}>
          <Value>4 / 4</Value>
          <Label $pl={3}>节拍</Label>
        </Cell>
        <Cell $w={50} $ml={11}>
          <Value>-</Value>
          <Label>调性</Label>
        </Cell>
        <Cell $w={50} $ml={8}>
          <Value>0</Value>
          <Label>变调</Label>
        </Cell>
        <Cell $w={60} $ml={11}>
          <Value>120.00</Value>
          <Label>速度</Label>
        </Cell>
        <Meters $ml={18}>
          <MeterTop>
            <MeterBars><MeterBar /><MeterBar /></MeterBars>
            <MeterBox />
          </MeterTop>
          <MeterBottom>
            <VU><VULevel /><VURest /></VU>
            <ToggleLeft /><ToggleRight />
          </MeterBottom>
        </Meters>
        <Slant />
        <PageTab $w={76}>编辑</PageTab>
        <PageTab $w={76}>混音</PageTab>
        <PageTab $w={84} $on>浏览</PageTab>
      </Transport>

      <Overlay viewBox="0 0 1920 1245">
        <g fill="none" stroke="#c9242e" strokeWidth="2.6">
          <rect x="875" y="105" width="49" height="40" />
          <rect x="993" y="146" width="64" height="34" />
          <rect x="838" y="467" width="197" height="66" />
        </g>
        <polygon points="827,500 558,597 555,603 540,601 550,592 556,592.6" fill="#d8232d" />
      </Overlay>
    </Page>
  );
}
